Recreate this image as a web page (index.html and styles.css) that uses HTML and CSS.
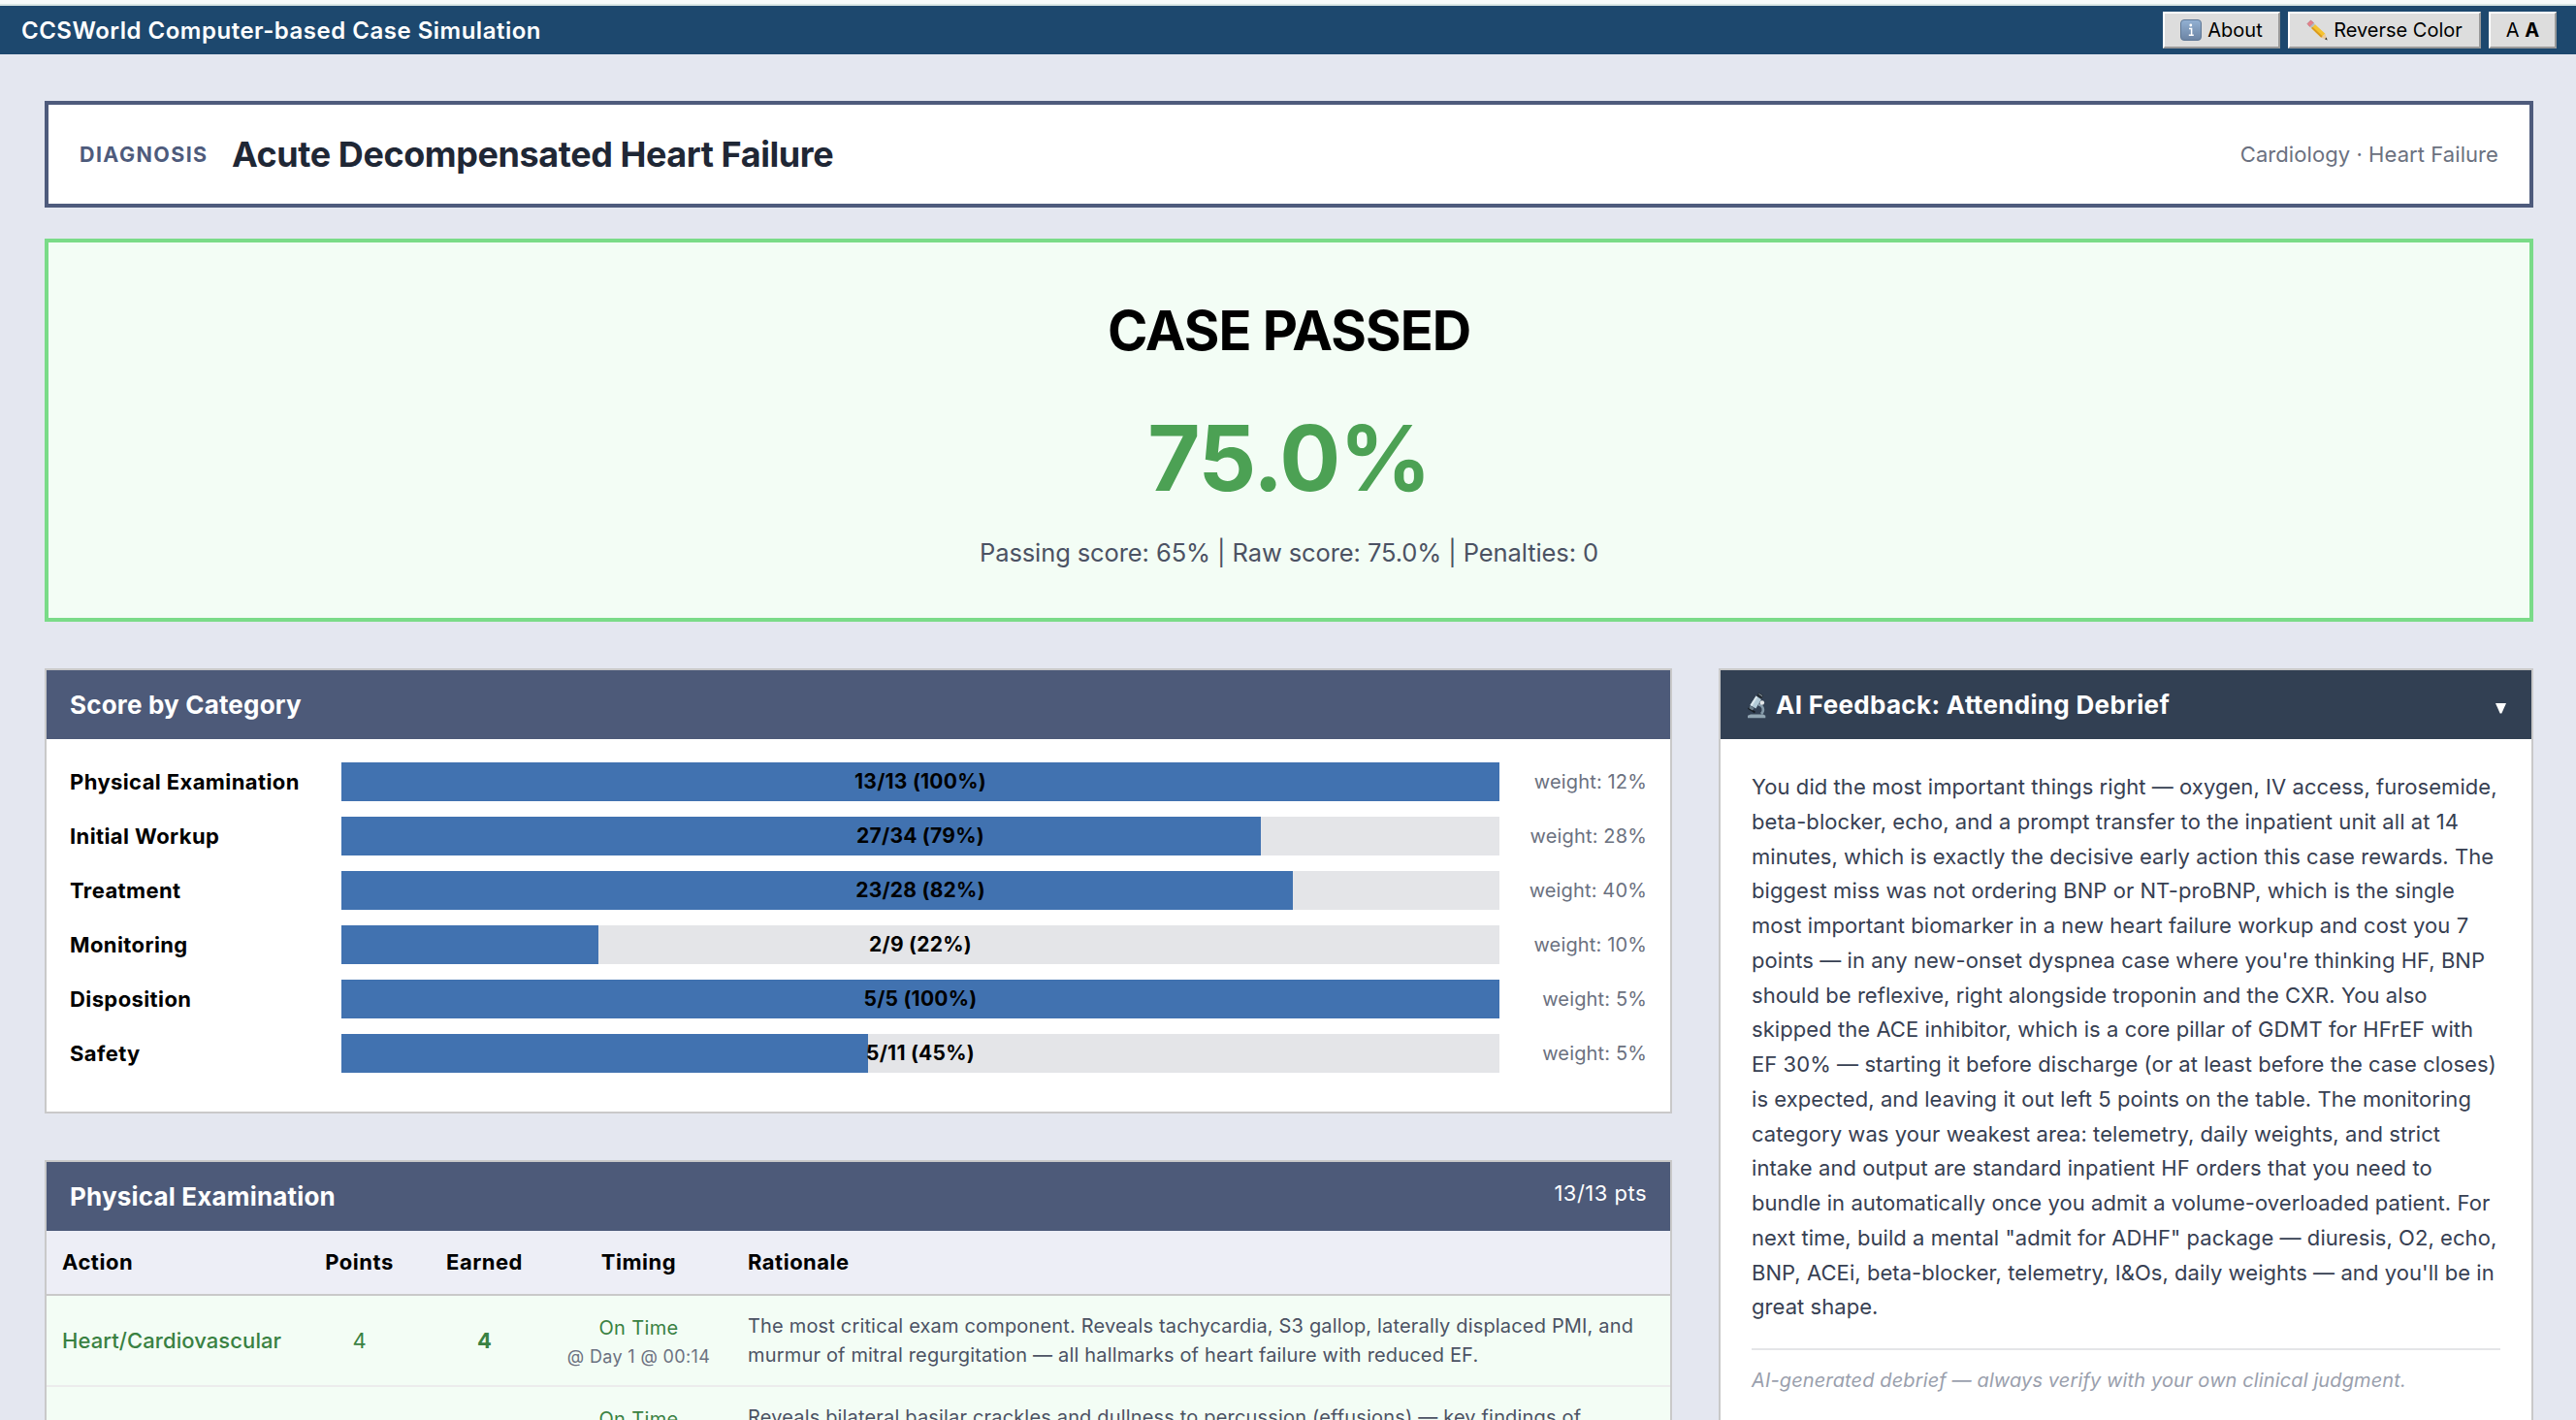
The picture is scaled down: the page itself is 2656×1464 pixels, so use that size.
FILE: index.html
```html
<!DOCTYPE html>
<html lang="en">
<head>
<meta charset="utf-8">
<title>CCSWorld Computer-based Case Simulation</title>
<link rel="stylesheet" href="styles.css">
</head>
<body>
<div class="strip"></div>
<div class="topbar">
    <span class="brand">CCSWorld Computer-based Case Simulation</span>
    <div class="tools">
        <button class="btn-about">
            <svg class="ico" width="22" height="22" viewBox="0 0 22 22">
                <defs><linearGradient id="info" x1="0" y1="0" x2="0" y2="1"><stop offset="0" stop-color="#93b1d3"/><stop offset="1" stop-color="#6b83a3"/></linearGradient></defs>
                <rect x=".5" y=".5" width="21" height="21" rx="3.5" fill="url(#info)" stroke="#5f7896"/>
                <circle cx="10.8" cy="6" r="1.4" fill="#fff"/>
                <path d="M9 9.500h2.600v6.500M8.800 16.300h5" fill="none" stroke="#fff" stroke-width="1.500"/>
            </svg>
            <span>About</span>
        </button>
        <button class="btn-color">
            <svg class="ico" width="22" height="22" viewBox="0 0 22 22">
                <path d="M1 4.500L4.500 1l3 2.600-4 3.800z" fill="#e8808a" stroke="#a85560" stroke-width=".5"/>
                <path d="M3.500 7.400l4-3.800 1.600 1.600-4 3.800z" fill="#b5bcc2"/>
                <path d="M5.100 9l4-3.800 10.300 9.600-4.100 4z" fill="#f5c230"/>
                <path d="M5.100 9l1.300-1.300 10.400 9.700-1.500 1.400z" fill="#d99a20"/>
                <path d="M15.300 18.800l4.100-4 2 6.400z" fill="#ecc99a"/>
                <path d="M19 20.200l1.800-1.700.8 3z" fill="#333"/>
            </svg>
            <span>Reverse Color</span>
        </button>
        <button class="btn-font"><span>A <b>A</b></span></button>
    </div>
</div>

<div class="page">
    <div class="diagnosis">
        <span class="diag-label">DIAGNOSIS</span>
        <span class="diag-name">Acute Decompensated Heart Failure</span>
        <span class="diag-topic">Cardiology · Heart Failure</span>
    </div>

    <div class="result">
        <div class="result-title">CASE PASSED</div>
        <div class="result-score">75.0%</div>
        <div class="result-detail">Passing score: 65% | Raw score: 75.0% | Penalties: 0</div>
    </div>

    <div class="columns">
        <div class="main">
            <!-- Category scores -->
            <div class="panel">
                <div class="panel-head"><span>Score by Category</span></div>
                <div class="scores">
                    <div class="score-row">
                        <span class="cat">Physical Examination</span>
                        <div class="bar"><div class="fill" style="width: 100%"></div><span class="bar-text">13/13 (100%)</span></div>
                        <span class="weight">weight: 12%</span>
                    </div>
                    <div class="score-row">
                        <span class="cat">Initial Workup</span>
                        <div class="bar"><div class="fill" style="width: 79.41%"></div><span class="bar-text">27/34 (79%)</span></div>
                        <span class="weight">weight: 28%</span>
                    </div>
                    <div class="score-row">
                        <span class="cat">Treatment</span>
                        <div class="bar"><div class="fill" style="width: 82.14%"></div><span class="bar-text">23/28 (82%)</span></div>
                        <span class="weight">weight: 40%</span>
                    </div>
                    <div class="score-row">
                        <span class="cat">Monitoring</span>
                        <div class="bar"><div class="fill" style="width: 22.22%"></div><span class="bar-text">2/9 (22%)</span></div>
                        <span class="weight">weight: 10%</span>
                    </div>
                    <div class="score-row">
                        <span class="cat">Disposition</span>
                        <div class="bar"><div class="fill" style="width: 100%"></div><span class="bar-text">5/5 (100%)</span></div>
                        <span class="weight">weight: 5%</span>
                    </div>
                    <div class="score-row">
                        <span class="cat">Safety</span>
                        <div class="bar"><div class="fill" style="width: 45.45%"></div><span class="bar-text">5/11 (45%)</span></div>
                        <span class="weight">weight: 5%</span>
                    </div>
                </div>
            </div>

            <!-- Physical exam detail -->
            <div class="panel">
                <div class="panel-head"><span>Physical Examination</span><span class="pts">13/13 pts</span></div>
                <table class="actions">
                    <tr>
                        <th class="c-action">Action</th>
                        <th class="c-points">Points</th>
                        <th class="c-earned">Earned</th>
                        <th class="c-timing">Timing</th>
                        <th class="c-why">Rationale</th>
                    </tr>
                    <tr>
                        <td class="action">Heart/Cardiovascular</td>
                        <td class="points">4</td>
                        <td class="earned">4</td>
                        <td class="timing"><div>On Time</div><div class="when">@ Day 1 @ 00:14</div></td>
                        <td class="why">The most critical exam component. Reveals tachycardia, S3 gallop, laterally displaced PMI, and<br>murmur of mitral regurgitation — all hallmarks of heart failure with reduced EF.</td>
                    </tr>
                    <tr>
                        <td class="action"></td>
                        <td class="points"></td>
                        <td class="earned"></td>
                        <td class="timing"><div>On Time</div><div class="when">&nbsp;</div></td>
                        <td class="why">Reveals bilateral basilar crackles and dullness to percussion (effusions) — key findings of<br>&nbsp;</td>
                    </tr>
                </table>
            </div>
        </div>

        <div class="side">
            <div class="panel feedback">
                <div class="panel-head">
                    <svg class="scope" width="20" height="28" viewBox="0 0 20 28">
                        <path d="M12 13.500c5 .5 6.500 6 3 9.500" fill="none" stroke="#8499a8" stroke-width="2.600"/>
                        <path d="M1 27.200v-2.400l3-1.300h13l2.300 1.300v2.400z" fill="#91a5b2"/>
                        <path d="M1.500 17l7 4.500" stroke="#161c22" stroke-width="2"/>
                        <path d="M3.500 14.500l4 2.600-1.500 2.400-3.600-2.300z" fill="#6d7f8c"/>
                        <path d="M9.500 4.500l5.500 3.500-5.600 9.500-5.900-3.500z" fill="#b3cbd8"/>
                        <path d="M9.500 4.500l1.700 1-5.700 9.600-2-1.100z" fill="#dce8ee"/>
                        <path d="M12.300 1l4.700 3-1.900 3.500-4.700-2.900z" fill="#252c33"/>
                        <path d="M12.500 2.400l3.600 2.300" stroke="#93a1ab" stroke-width="1"/>
                        <circle cx="15.800" cy="11.500" r="2.300" fill="#e4e7e9"/>
                    </svg>
                    <span>AI Feedback: Attending Debrief</span>
                    <svg class="caret" width="11" height="11" viewBox="0 0 11 11"><path d="M0 0h11L6.300 10.500H4.700z" fill="#fff"/></svg>
                </div>
                <div class="feedback-body">
                    <p>You did the most important things right — oxygen, IV access, furosemide,<br>
                    beta-blocker, echo, and a prompt transfer to the inpatient unit all at 14<br>
                    minutes, which is exactly the decisive early action this case rewards. The<br>
                    biggest miss was not ordering BNP or NT-proBNP, which is the single<br>
                    most important biomarker in a new heart failure workup and cost you 7<br>
                    points — in any new-onset dyspnea case where you're thinking HF, BNP<br>
                    should be reflexive, right alongside troponin and the CXR. You also<br>
                    skipped the ACE inhibitor, which is a core pillar of GDMT for HFrEF with<br>
                    EF 30% — starting it before discharge (or at least before the case closes)<br>
                    is expected, and leaving it out left 5 points on the table. The monitoring<br>
                    category was your weakest area: telemetry, daily weights, and strict<br>
                    intake and output are standard inpatient HF orders that you need to<br>
                    bundle in automatically once you admit a volume-overloaded patient. For<br>
                    next time, build a mental "admit for ADHF" package — diuresis, O2, echo,<br>
                    BNP, ACEi, beta-blocker, telemetry, I&amp;Os, daily weights — and you'll be in<br>
                    great shape.</p>
                    <div class="note">AI-generated debrief — always verify with your own clinical judgment.</div>
                </div>
            </div>
        </div>
    </div>
</div>
</body>
</html>
```
FILE: styles.css
```css
* {
    margin: 0;
    padding: 0;
    box-sizing: border-box;
}

html, body {
    height: 1464px;
    overflow: hidden;
}

body {
    background: #e4e7f0;
    font-family: Inter, "Liberation Sans", sans-serif;
    font-size: 22px;
    color: #000;
}

.strip {
    height: 6px;
    background: #f6fafb;
    border-bottom: 2px solid #d8e6e6;
}

.topbar {
    display: flex;
    align-items: center;
    justify-content: space-between;
    height: 50px;
    padding: 0 20px 0 22px;
    background: #1d486e;
}

.brand {
    font-size: 24px;
    font-weight: 600;
    letter-spacing: 0.5px;
    color: #fff;
}

.tools {
    display: flex;
    gap: 8px;
}

.tools button {
    display: flex;
    align-items: center;
    justify-content: center;
    gap: 6px;
    height: 38px;
    background: #ddd;
    border: 2px solid;
    border-color: #fff #999 #999 #fff;
    font: 20px Inter, sans-serif;
    color: #000;
}

.btn-about {width: 121px;}
.btn-color {width: 199px;}
.btn-font {width: 70px;}

.page {padding: 48px 44px 0 46px;}

.diagnosis {
    display: flex;
    align-items: center;
    height: 110px;
    padding: 0 32px;
    background: #fff;
    border: 4px solid #4e5b7c;
}

.diag-label {
    width: 157px;
    font-weight: 700;
    font-size: 21.5px;
    letter-spacing: 1.4px;
    color: #4e5b7c;
}

.diag-name {
    font-size: 36px;
    font-weight: 700;
    letter-spacing: -0.43px;
    color: #1f2735;
}

.diag-topic {
    margin-left: auto;
    letter-spacing: 0.07px;
    color: #6b7180;
}

.result {
    height: 395px;
    margin-top: 32px;
    padding-top: 55px;
    background: #f3fdf5;
    border: 4px solid #7adb88;
    text-align: center;
}

.result-title {
    font-size: 56px;
    font-weight: 700;
    line-height: 72px;
    letter-spacing: -1px;
}

.result-score {
    margin-top: 39px;
    font-size: 93.5px;
    font-weight: 700;
    line-height: 112px;
    letter-spacing: -1.2px;
    color: #4ca154;
}

.result-detail {
    margin-top: 24px;
    font-size: 25.5px;
    line-height: 36px;
    letter-spacing: -0.1px;
    color: #4b5263;
}

.columns {
    display: flex;
    gap: 48px;
    margin-top: 48px;
}

.main {
    display: flex;
    flex-direction: column;
    gap: 48px;
    width: 1678px;
}

.side {width: 840px;}

.panel {
    background: #fff;
    border: 2px solid #c9c9c9;
}

.panel-head {
    display: flex;
    align-items: center;
    height: 71px;
    padding: 0 24px;
    background: #4d5a79;
    color: #fff;
    font-size: 26px;
    font-weight: 700;
    letter-spacing: 0.18px;
}

.pts {
    margin: 0 0 7px auto;
    font-size: 22px;
    font-weight: 400;
    letter-spacing: 0.48px;
}

.scores {padding: 24px 24px 40px;}

.score-row {
    display: grid;
    grid-template-columns: 280px 1194px 152px;
    align-items: center;
    margin-bottom: 16px;
}

.score-row:last-child {margin-bottom: 0;}

.cat {
    font-weight: 700;
    letter-spacing: 0.4px;
}

.bar {
    position: relative;
    height: 40px;
    background: #e4e5e8;
}

.fill {
    height: 40px;
    background: #4172b0;
}

/* score sits over the bar */
.bar-text {
    position: absolute;
    top: 0;
    left: 0;
    width: 100%;
    text-align: center;
    font-size: 21px;
    font-weight: 700;
    line-height: 40px;
    letter-spacing: 0.25px;
}

.weight {
    text-align: right;
    font-size: 20px;
    letter-spacing: 0.15px;
    color: #6b7180;
}

.actions {
    width: 100%;
    table-layout: fixed;
    border-collapse: separate;
    border-spacing: 0;
}

.actions th {
    height: 67px;
    padding: 0 16px 2px;
    background: #edeef6;
    border-bottom: 2px solid #c9c9c9;
    font-weight: 700;
    letter-spacing: 0.5px;
}

.c-action {width: 256px; text-align: left;}
.c-points {width: 133px;}
.c-earned {width: 125px;}
.c-timing {width: 193px;}
.c-why {text-align: left;}

.actions td {
    height: 94px;
    padding: 0 16px;
    background: #f3fdf5;
    border-bottom: 2px solid #ececec;
    color: #398142;
    text-align: center;
}

.actions td.action {
    text-align: left;
    font-weight: 500;
    letter-spacing: 0.08px;
    white-space: nowrap;
}

.actions td.earned {font-weight: 700;}

.actions td.timing {
    padding-top: 3px;
    font-size: 20px;
    line-height: 30px;
    letter-spacing: 0.33px;
    white-space: nowrap;
}

.when {
    font-size: 18px;
    letter-spacing: 0.35px;
    color: #6b7180;
}

.actions td.why {
    text-align: left;
    font-size: 20px;
    line-height: 30px;
    letter-spacing: 0.17px;
    color: #4b5263;
    white-space: nowrap;
}

.feedback .panel-head {
    background: #324053;
    letter-spacing: 0.32px;
}

.scope {margin: 0 10px 0 3px;}

.caret {
    margin: 7px 2px 0 auto;
}

.feedback-body {
    padding: 32px 32px 80px;
    color: #374052;
}

.feedback-body p {
    line-height: 35.75px;
    letter-spacing: 0.06px;
    white-space: nowrap;
}

.note {
    margin-top: 24px;
    padding-top: 16px;
    border-top: 2px solid #e4e5e8;
    font-size: 20px;
    line-height: 30px;
    letter-spacing: 0.12px;
    font-style: italic;
    color: #9a9fad;
}
```
